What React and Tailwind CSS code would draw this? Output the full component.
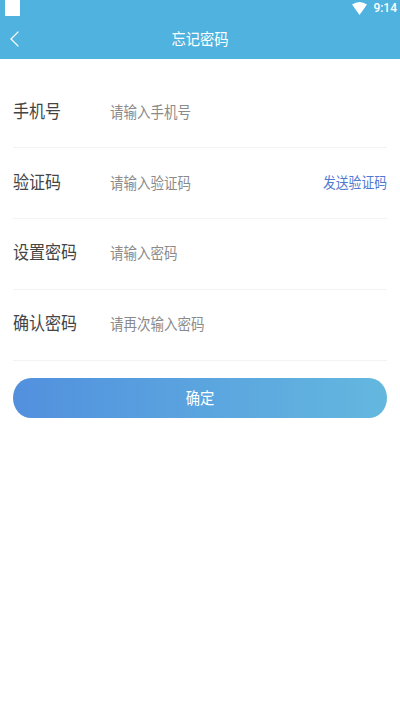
import { useState } from "react";

const fields = [
  { label: "手机号", placeholder: "请输入手机号", type: "tel" },
  { label: "验证码", placeholder: "请输入验证码", type: "text", action: "发送验证码" },
  { label: "设置密码", placeholder: "请输入密码", type: "password" },
  { label: "确认密码", placeholder: "请再次输入密码", type: "password" },
];

function StatusBar() {
  return (
    <div className="flex h-[18px] items-start justify-between pl-[5px] pr-[3px]">
      <div className="h-4 w-[15px] bg-white" />
      <div className="flex h-4 items-center gap-[6px]">
        <svg className="mt-px h-[13px] w-[15px]" viewBox="0 0 15 13" fill="#fff">
          <path d="M0 2.6Q7.5-2.4 15 2.6L7.5 13Z" />
        </svg>
        <span className="font-[Roboto,sans-serif] text-xs font-medium leading-4 text-white">9:14</span>
      </div>
    </div>
  );
}

function Field({ label, placeholder, type, action }) {
  const [value, setValue] = useState("");

  return (
    <label className="flex h-[70.8px] items-center border-b border-[#f3f3f3] pb-[5px]">
      <span className="w-[97px] shrink-0 scale-y-[1.16] text-base leading-6 text-[#444]">{label}</span>
      <input
        type={type}
        value={value}
        onChange={(e) => setValue(e.target.value)}
        placeholder={placeholder}
        className="mt-[2px] min-w-0 flex-1 scale-y-[1.14] text-[13.5px] leading-5 text-[#444] outline-none placeholder:text-[#8a8a8a]"
      />
      {action && <button type="button" className="mt-[2px] shrink-0 scale-y-[1.14] text-[12.8px] leading-5 text-[#5079d2]">{action}</button>}
    </label>
  );
}

export default function App() {
  return (
    <div className="min-h-screen bg-white font-['Noto_Sans_CJK_SC',sans-serif]">
      <header className="h-[59.4px] bg-[#50b2de]">
        <StatusBar />
        <div className="grid h-[41px] grid-cols-[1fr_auto_1fr] items-center">
          <button type="button" className="pl-[10px]" aria-label="返回">
            <svg className="h-4 w-[9px]" viewBox="0 0 9 16" fill="none" stroke="#fff" strokeWidth="1.3">
              <path d="M8.4.6 1 8l7.4 7.4" />
            </svg>
          </button>
          <h1 className="-mt-[2px] scale-y-[1.14] text-[14.3px] leading-5 text-white">忘记密码</h1>
        </div>
      </header>

      <form className="px-[13px] pt-[18px]" onSubmit={(e) => e.preventDefault()}>
        {fields.map((field) => <Field key={field.label} {...field} />)}
        <button type="submit" className="mt-[17.6px] flex h-10 w-full items-center justify-center rounded-[18px/20px] bg-linear-to-r from-[#5290de] to-[#64b8df] pb-[3px] text-white">
          <span className="scale-y-[1.14] text-[14.3px] leading-5">确定</span>
        </button>
      </form>
    </div>
  );
}
